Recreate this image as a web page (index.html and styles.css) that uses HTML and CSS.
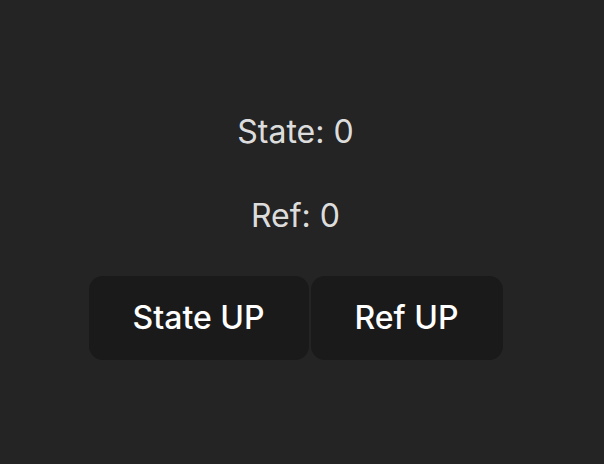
FILE: index.html
```html
<!DOCTYPE html>
<html lang="en">
<head>
<meta charset="UTF-8">
<meta name="viewport" content="width=device-width, initial-scale=1.0">
<title>State vs Ref</title>
<link rel="stylesheet" href="styles.css">
</head>
<body>
<div class="app">
  <p class="counter">State: 0</p>
  <p class="counter">Ref: 0</p>
  <div class="actions">
    <button class="btn">State UP</button>
    <button class="btn">Ref UP</button>
  </div>
</div>
</body>
</html>
```

FILE: styles.css
```css
/* Dark counter demo */
html, body {
  height: 100%;
}
body {
  margin: 0;
  background-color: #242424;
  color: rgba(255, 255, 255, 0.87);
  font-family: Inter, "Noto Sans", sans-serif;
  font-size: 32px;
  line-height: 48px;
  display: flex;
  align-items: center;
  justify-content: center;
  padding: 3px 13px 0 0;
  box-sizing: border-box;
}
.app {
  text-align: center;
}
.counter {
  margin: 0 0 36px;
}
.actions {
  display: flex;
  justify-content: center;
  gap: 2px;
}
.btn {
  font-family: inherit;
  font-size: 32px;
  font-weight: 500;
  line-height: 48px;
  color: #fff;
  background-color: #1a1a1a;
  border: 1px solid transparent;
  border-radius: 14px;
  padding: 17px 43px;
  cursor: pointer;
}
```
